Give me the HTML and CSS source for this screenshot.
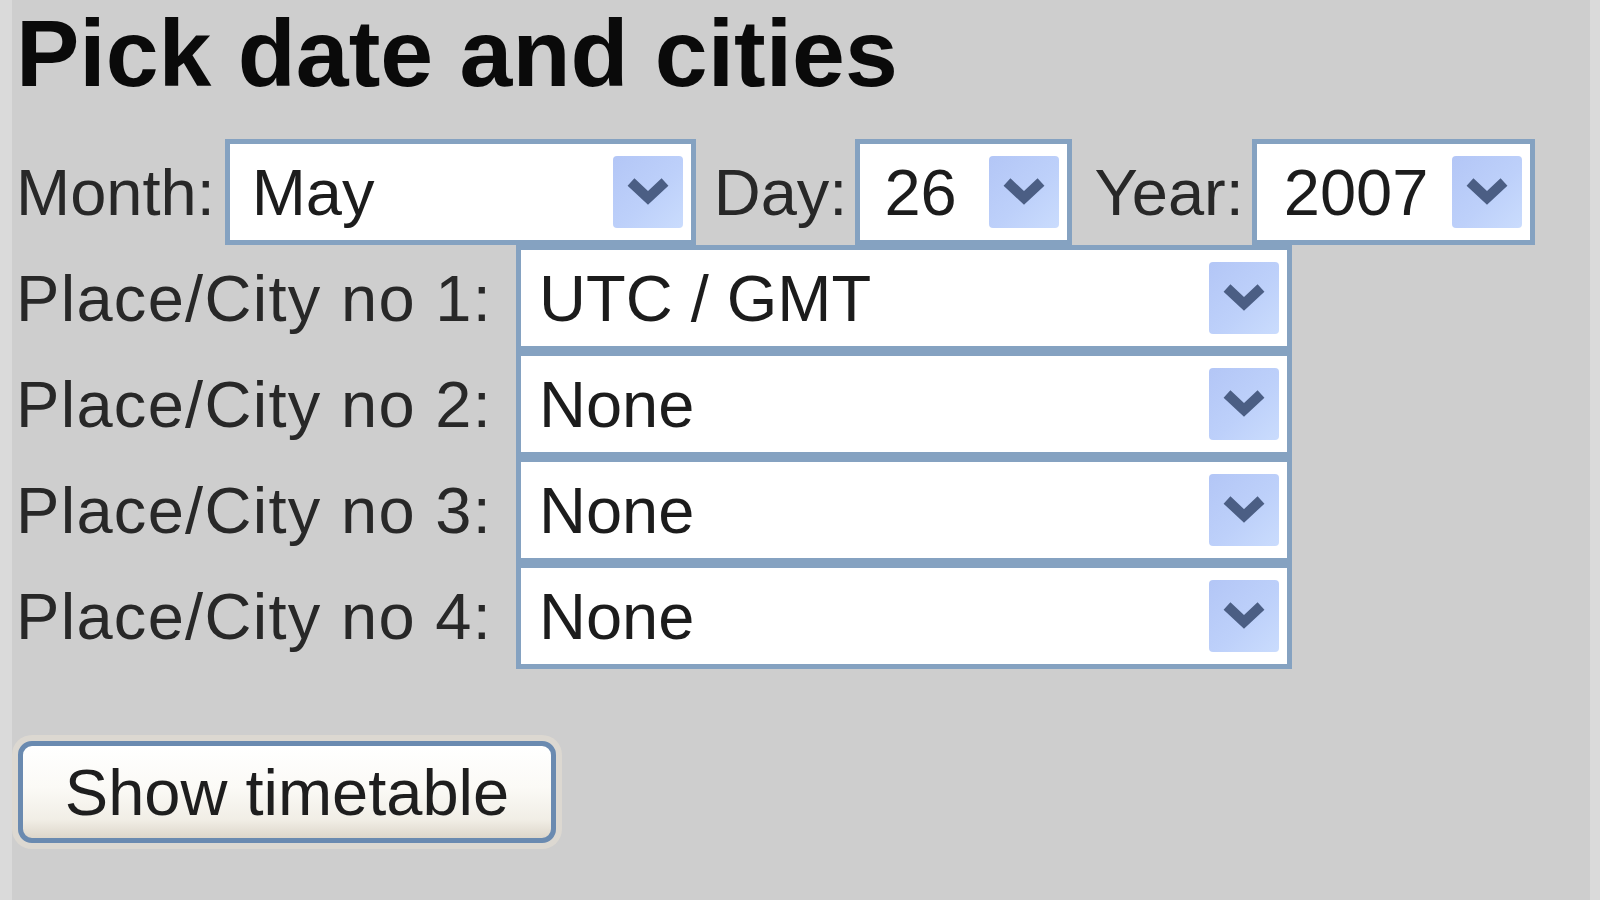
FILE: index.html
```html
<!DOCTYPE html>
<html lang="en">
<head>
<meta charset="utf-8">
<title>Pick date and cities</title>
<link rel="stylesheet" href="styles.css">
</head>
<body>
<div class="page">
  <h1 class="title">Pick date and cities</h1>

  <div class="date-row">
    <span class="lbl lbl-month">Month:</span>
    <div class="sel sel-month"><span class="val">May</span><span class="drop"><svg viewBox="0 0 70 72"><polyline points="18,26 35,42 52,26"/></svg></span></div>
    <span class="lbl lbl-day">Day:</span>
    <div class="sel sel-day"><span class="val">26</span><span class="drop"><svg viewBox="0 0 70 72"><polyline points="18,26 35,42 52,26"/></svg></span></div>
    <span class="lbl lbl-year">Year:</span>
    <div class="sel sel-year"><span class="val">2007</span><span class="drop"><svg viewBox="0 0 70 72"><polyline points="18,26 35,42 52,26"/></svg></span></div>
  </div>

  <div class="cities">
    <div class="city-row">
      <span class="lbl lbl-city">Place/City no 1:</span>
      <div class="sel sel-city"><span class="val">UTC / GMT</span><span class="drop"><svg viewBox="0 0 70 72"><polyline points="18,26 35,42 52,26"/></svg></span></div>
    </div>
    <div class="city-row">
      <span class="lbl lbl-city">Place/City no 2:</span>
      <div class="sel sel-city"><span class="val">None</span><span class="drop"><svg viewBox="0 0 70 72"><polyline points="18,26 35,42 52,26"/></svg></span></div>
    </div>
    <div class="city-row">
      <span class="lbl lbl-city">Place/City no 3:</span>
      <div class="sel sel-city"><span class="val">None</span><span class="drop"><svg viewBox="0 0 70 72"><polyline points="18,26 35,42 52,26"/></svg></span></div>
    </div>
    <div class="city-row">
      <span class="lbl lbl-city">Place/City no 4:</span>
      <div class="sel sel-city"><span class="val">None</span><span class="drop"><svg viewBox="0 0 70 72"><polyline points="18,26 35,42 52,26"/></svg></span></div>
    </div>
  </div>

  <button class="btn" type="button">Show timetable</button>
</div>
</body>
</html>
```

FILE: styles.css
```css
html, body {
  margin: 0;
  padding: 0;
  height: 100%;
}

body {
  background: #dadada;
  font-family: "Liberation Sans", Arial, sans-serif;
  overflow: hidden;
}

.page {
  box-sizing: border-box;
  margin-left: 12px;
  width: 1578px;
  height: 900px;
  padding-left: 4px;
  padding-top: 0;
  background: #cecece;
}

.title {
  margin: 0 0 32px 0;
  font-size: 95px;
  line-height: 107px;
  font-weight: bold;
  color: #0a0a0a;
  white-space: nowrap;
}

.date-row {
  display: flex;
  align-items: center;
  height: 106px;
}

.lbl {
  font-size: 65px;
  color: #282828;
  white-space: nowrap;
}

.lbl-month { margin-right: 10px; }
.lbl-day { margin-left: 18px; margin-right: 8px; }
.lbl-year { margin-left: 22px; margin-right: 8px; }

.sel {
  box-sizing: border-box;
  height: 106px;
  border: 5px solid #85a2c1;
  background: #ffffff;
  display: flex;
  align-items: center;
  justify-content: space-between;
  padding-left: 18px;
  font-size: 65px;
  color: #1c1c1c;
  white-space: nowrap;
}

.sel-month { width: 471px; padding-left: 22px; }
.sel-day { width: 217px; padding-left: 24px; }
.sel-year { width: 283px; padding-left: 27px; }
.sel-city { width: 776px; padding-left: 18px; }

.drop {
  flex: none;
  width: 70px;
  height: 72px;
  margin-right: 8px;
  border-radius: 4px;
  background: linear-gradient(135deg, #b3c6f6 0%, #bdd0fa 55%, #cadcfd 100%);
  display: flex;
}

.drop svg {
  width: 70px;
  height: 72px;
}

.drop polyline {
  fill: none;
  stroke: #4b5e84;
  stroke-width: 10;
  stroke-linejoin: miter;
}

.cities {
  display: flex;
  flex-direction: column;
}

.city-row {
  display: flex;
  align-items: center;
  height: 106px;
}

.lbl-city {
  width: 500px;
  letter-spacing: 1.3px;
}

.btn {
  display: block;
  box-sizing: border-box;
  margin: 72px 0 0 2px;
  width: 538px;
  height: 102px;
  border: 5px solid #6a8ab0;
  border-radius: 14px;
  background: linear-gradient(180deg, #ffffff 0%, #fbfaf6 45%, #f1eee6 80%, #ddd6ca 100%);
  box-shadow: 0 0 0 6px #dcd8d1;
  font-family: "Liberation Sans", Arial, sans-serif;
  font-size: 65px;
  color: #1e1e1e;
  padding: 0;
  text-align: center;
}
```
